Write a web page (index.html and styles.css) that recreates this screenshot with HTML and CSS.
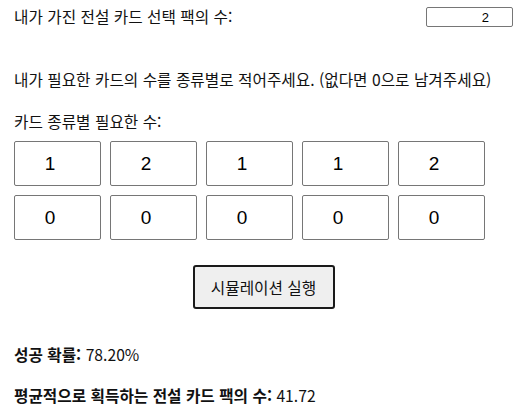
FILE: index.html
```html
<!DOCTYPE html>
<html lang="ko">
<head>
    <meta charset="UTF-8">
    <meta name="viewport" content="width=device-width, initial-scale=1.0">
    <title>전설 카드 시뮬레이터</title>
    <link rel="stylesheet" href="styles.css">
</head>
<body>
    <div class="page">
        <!-- 보유 팩 수 -->
        <div class="pack-row">
            <label for="packCount">내가 가진 전설 카드 선택 팩의 수:</label>
            <input type="text" id="packCount" class="pack-input" value="2">
        </div>

        <p class="hint">내가 필요한 카드의 수를 종류별로 적어주세요. (없다면 0으로 남겨주세요)</p>
        <p class="grid-label">카드 종류별 필요한 수:</p>

        <!-- 카드 종류별 입력 -->
        <div class="card-grid">
            <input type="text" class="card-input" value="1">
            <input type="text" class="card-input" value="2">
            <input type="text" class="card-input" value="1">
            <input type="text" class="card-input" value="1">
            <input type="text" class="card-input" value="2">
            <input type="text" class="card-input" value="0">
            <input type="text" class="card-input" value="0">
            <input type="text" class="card-input" value="0">
            <input type="text" class="card-input" value="0">
            <input type="text" class="card-input" value="0">
        </div>

        <div class="actions">
            <button class="run-button">시뮬레이션 실행</button>
        </div>

        <!-- 결과 -->
        <p class="result result-first"><strong>성공 확률:</strong> 78.20%</p>
        <p class="result"><strong>평균적으로 획득하는 전설 카드 팩의 수:</strong> 41.72</p>
    </div>
</body>
</html>
```

FILE: styles.css
```css
body {
    margin: 0;
    font-family: "Noto Sans CJK KR", "Noto Sans", sans-serif;
    font-size: 15.7px;
    color: #111;
    background-color: white;
}
.page {
    padding: 0 8px 0 14px;
}
p {
    margin: 0;
    line-height: 24px;
}
.pack-row {
    display: flex;
    justify-content: space-between;
    align-items: center;
    padding-top: 5px;
    line-height: 24px;
}
.pack-input {
    width: 87px;
    height: 20px;
    box-sizing: border-box;
    border: 1px solid #767676;
    border-radius: 2px;
    padding: 0 23px 0 4px;
    text-align: right;
    font-family: "Liberation Sans", Arial, sans-serif;
    font-size: 13px;
    color: black;
}
.hint {
    margin-top: 39px;
}
.grid-label {
    margin-top: 18px;
}
.card-grid {
    display: grid;
    grid-template-columns: repeat(5, 87px);
    column-gap: 9px;
    row-gap: 9px;
    margin-top: 7px;
}
.card-input {
    width: 87px;
    height: 45px;
    box-sizing: border-box;
    border: 1px solid #767676;
    border-radius: 2px;
    padding: 0 15px 0 0;
    text-align: center;
    font-family: "Liberation Sans", Arial, sans-serif;
    font-size: 19px;
    color: black;
}
.actions {
    display: flex;
    justify-content: center;
    margin-top: 25px;
}
.run-button {
    width: 142px;
    height: 44px;
    background-color: #efefef;
    border: 2px solid #1a1a1a;
    border-radius: 3px;
    font-family: "Noto Sans CJK KR", "Noto Sans", sans-serif;
    font-size: 15.7px;
    color: #111;
    cursor: pointer;
}
.result-first {
    margin-top: 34px;
}
.result + .result {
    margin-top: 17px;
}
.result strong {
    font-weight: bold;
}
```
